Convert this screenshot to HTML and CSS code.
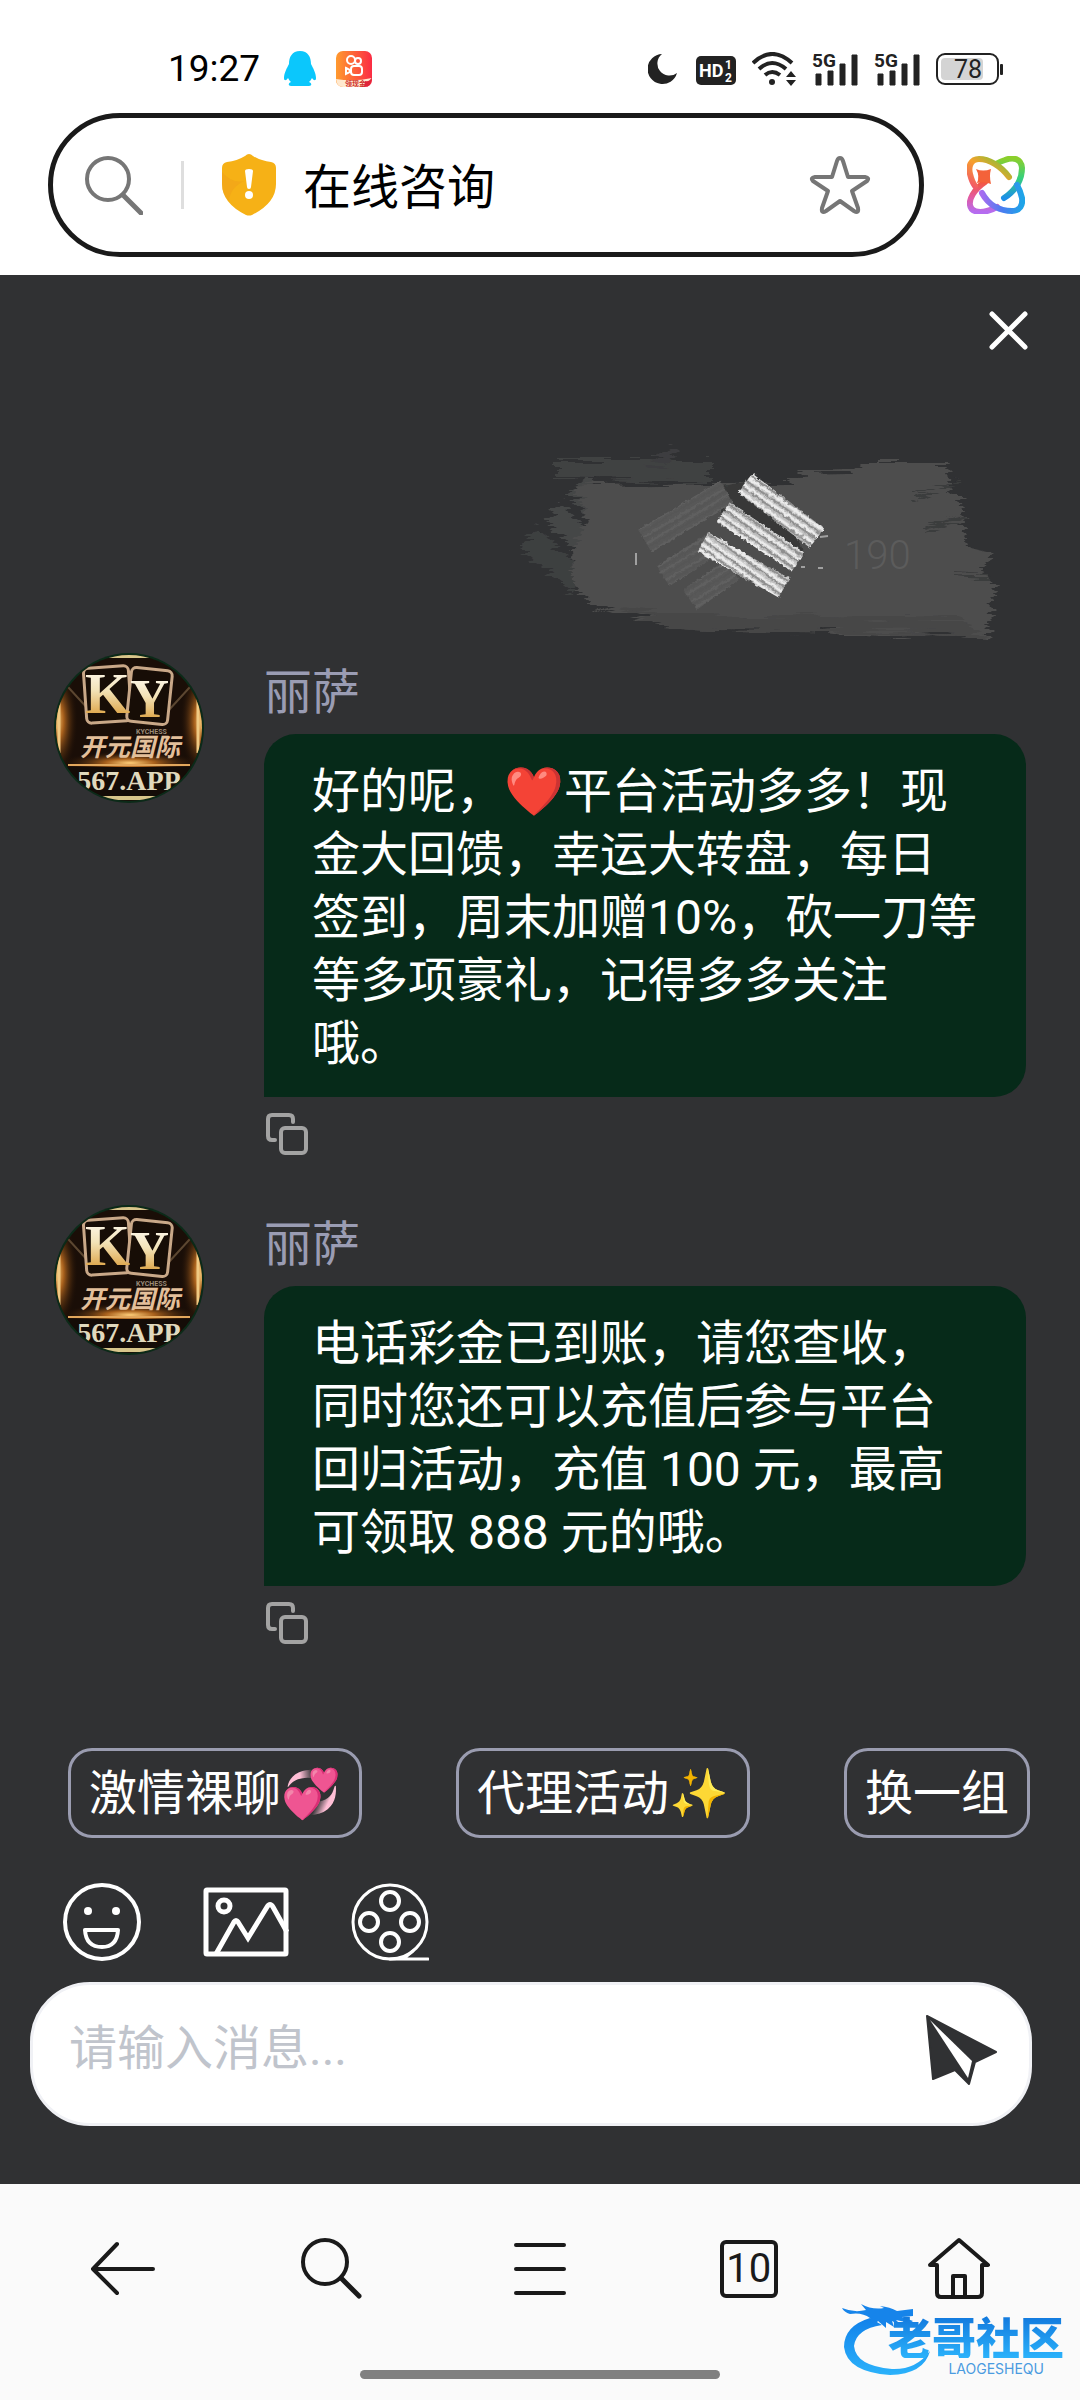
FILE: index.html
```html
<!DOCTYPE html>
<html lang="zh-CN">
<head>
  <meta charset="UTF-8">
  <meta name="viewport" content="width=device-width, initial-scale=1.0">
  <title>在线咨询</title>
  <link rel="stylesheet" href="styles.css">
</head>
<body>
  <!-- shared avatar drawing -->
  <svg class="defs" width="0" height="0" aria-hidden="true">
    <defs>
      <linearGradient id="gold" x1="0" y1="0" x2="0" y2="1">
        <stop offset="0.1" stop-color="#fffaf0"/>
        <stop offset="0.45" stop-color="#f3e3b8"/>
        <stop offset="0.9" stop-color="#d99a35"/>
      </linearGradient>
      <radialGradient id="glow" cx="0.5" cy="0.5" r="0.5">
        <stop offset="0" stop-color="#ffcf7a"/>
        <stop offset="0.35" stop-color="#a8601c"/>
        <stop offset="1" stop-color="#1a0e07" stop-opacity="0"/>
      </radialGradient>
      <clipPath id="round"><circle cx="75" cy="75" r="73"/></clipPath>
      <symbol id="avatar" viewBox="0 0 150 150">
        <circle cx="75" cy="75" r="75" fill="#0b2a18"/>
        <g clip-path="url(#round)">
          <rect width="150" height="150" fill="#1a0e07"/>
          <ellipse cx="2" cy="68" rx="22" ry="56" fill="url(#glow)"/>
          <ellipse cx="148" cy="68" rx="22" ry="56" fill="url(#glow)"/>
          <ellipse cx="76" cy="110" rx="70" ry="12" fill="url(#glow)"/>
          <path d="M14 34L36 58M136 34L114 58" stroke="#5b4630" stroke-width="2"/>
          <path d="M30 3H120M30 145H120" stroke="#d8c68b" stroke-width="4"/>
          <path d="M5 40V100M144 40V100" stroke="#f0c982" stroke-width="3"/>
          <rect x="31" y="14" width="45" height="55" rx="5" fill="#170d06" stroke="#c9a888" stroke-width="3" transform="rotate(-4 53 41)"/>
          <rect x="75" y="16" width="41" height="54" rx="5" fill="#170d06" stroke="#c9a888" stroke-width="3" transform="rotate(6 95 43)"/>
          <text x="31" y="60" class="avatar-serif" font-size="58" fill="url(#gold)">K</text>
          <text x="76" y="64" class="avatar-serif" font-size="54" fill="url(#gold)">Y</text>
          <text x="82" y="81" class="avatar-tiny" fill="#9a8a78">KYCHESS</text>
          <text x="26" y="103" class="avatar-cjk" fill="#e3bf9a">开元国际</text>
          <path d="M14 112H136" stroke="#e2a75c" stroke-width="2"/>
          <rect y="114" width="150" height="29" fill="#140c07"/>
          <text x="75" y="137" text-anchor="middle" class="avatar-serif" font-size="28" fill="#e0d9bd">567.APP</text>
        </g>
      </symbol>
      <symbol id="copy" viewBox="0 0 42 42">
        <path d="M9 27H6Q2 27 2 23V6Q2 2 6 2H23Q27 2 27 6V9" fill="none" stroke="#a3a3a3" stroke-width="4" stroke-linecap="round"/>
        <rect x="15" y="15" width="25" height="25" rx="4" fill="none" stroke="#a3a3a3" stroke-width="4"/>
      </symbol>
      <symbol id="signal" viewBox="0 0 46 34">
        <text x="0" y="15" class="signal-text">5G</text>
        <path d="M4 22H9V33H4zM16 19H21V33H16zM28 12H33V33H28zM40 3H45V33H40z" fill="#222" stroke="#222" stroke-width="1" stroke-linejoin="round"/>
      </symbol>
    </defs>
  </svg>

  <header class="browser-top">
    <div class="status-bar">
      <div class="status-left">
        <span class="clock">19:27</span>
        <svg width="32" height="36" viewBox="0 0 32 36">
          <path d="M16 0C8 0 5 6 5 13C3 17 0 22 0 27C0 30 2 30 4 27C5 29 6 30 7 31C4 32 4 35 7 35H25C28 35 28 32 25 31C26 30 27 29 28 27C30 30 32 30 32 27C32 22 29 17 27 13C27 6 24 0 16 0Z" fill="#0bc7fc"/>
        </svg>
        <svg width="36" height="36" viewBox="0 0 36 36">
          <defs>
            <linearGradient id="ks"><stop offset="0" stop-color="#ff9a2e"/><stop offset="1" stop-color="#fb2c44"/></linearGradient>
          </defs>
          <rect width="36" height="36" rx="7" fill="url(#ks)"/>
          <g fill="none" stroke="#fff" stroke-width="2">
            <circle cx="15" cy="9" r="4"/><circle cx="22" cy="10" r="3"/>
            <rect x="15" y="15" width="11" height="9" rx="3"/><path d="M10 17L14 19V21L10 23Z"/>
          </g>
          <path d="M0 28Q18 31 36 27L30 36H7Q1 36 0 28Z" fill="#ffe9cf"/>
          <text x="9" y="35" class="ks-text">领现金</text>
          <path d="M29 30Q34 31 36 26Q36 36 28 36Z" fill="#e0253a"/>
        </svg>
      </div>
      <div class="status-right">
        <svg width="32" height="34" viewBox="0 0 32 34">
          <path d="M14 2A15 15 0 1 0 29 21A12 12 0 0 1 14 2Z" fill="#222"/>
        </svg>
        <svg width="40" height="34" viewBox="0 0 40 34">
          <rect y="4" width="40" height="29" rx="5" fill="#222"/>
          <text x="3" y="25" class="hd-text">HD</text>
          <text x="29" y="17" class="hd-small">1</text>
          <text x="29" y="30" class="hd-small">2</text>
        </svg>
        <svg width="44" height="34" viewBox="0 0 44 34">
          <g fill="none" stroke="#222" stroke-width="4">
            <path d="M1 11Q20 -7 40 11"/><path d="M7 17Q20 5 34 17"/><path d="M13 23Q20 17 28 23"/>
          </g>
          <circle cx="20" cy="30" r="3" fill="#222"/>
          <path d="M34 25L39 19L44 25ZM34 28L39 34L44 28Z" fill="#222"/>
        </svg>
        <svg width="46" height="34"><use href="#signal"/></svg>
        <svg width="46" height="34"><use href="#signal"/></svg>
        <svg width="67" height="34" viewBox="0 0 67 34">
          <rect x="1" y="2" width="61" height="30" rx="8" fill="none" stroke="#222" stroke-width="2"/>
          <rect x="5" y="6" width="42" height="22" rx="4" fill="#d4d4d4"/>
          <rect x="64" y="12" width="3" height="11" rx="1" fill="#222"/>
          <text x="32" y="26" text-anchor="middle" class="battery-text">78</text>
        </svg>
      </div>
    </div>

    <div class="address-row">
      <div class="address-bar">
        <svg width="58" height="60" viewBox="0 0 58 60">
          <circle cx="23" cy="24" r="21" fill="none" stroke="#767676" stroke-width="4"/>
          <path d="M38 40L56 58" stroke="#767676" stroke-width="5" stroke-linecap="round"/>
        </svg>
        <span class="divider"></span>
        <svg class="shield" width="54" height="62" viewBox="0 0 54 62">
          <path d="M27 0Q29 0 31 2Q39 7 49 8Q54 9 54 14V30Q54 49 30 61Q27 62 24 61Q0 49 0 30V14Q0 9 5 8Q15 7 23 2Q25 0 27 0Z" fill="#f6b116"/>
          <path d="M22 27Q8 34 7 47Q0 40 0 30V18Q10 30 22 27Z" fill="#efa01a" opacity="0.5"/>
          <path d="M23 17Q23 15 27 15Q31 15 31 17L29 33Q29 35 27 35Q25 35 25 33Z" fill="#fff"/>
          <circle cx="27" cy="41" r="4" fill="#fff"/>
        </svg>
        <input class="address" type="text" value="在线咨询" aria-label="地址栏">
        <button class="icon-btn" aria-label="收藏">
          <svg width="62" height="60" viewBox="0 0 62 60">
            <path d="M31 3Q33 3 34 6L39 22H56Q61 23 58 26L43 36L49 53Q50 59 45 56L31 46L17 56Q12 59 13 53L19 36L4 26Q1 23 6 22H23L28 6Q29 3 31 3Z" fill="none" stroke="#767676" stroke-width="4" stroke-linejoin="round"/>
          </svg>
        </button>
      </div>
      <button class="icon-btn" aria-label="AI 助手">
        <svg width="58" height="58" viewBox="0 0 58 58">
          <defs>
            <linearGradient id="g1" x1="0" y1="1" x2="1" y2="0"><stop offset="0" stop-color="#f2556c"/><stop offset="0.5" stop-color="#f7a02c"/><stop offset="1" stop-color="#6cc93a"/></linearGradient>
            <linearGradient id="g2" x1="0" y1="0" x2="0" y2="1"><stop offset="0" stop-color="#8bcf2c"/><stop offset="0.5" stop-color="#35d07c"/><stop offset="1" stop-color="#1b8fe8"/></linearGradient>
            <linearGradient id="g3"><stop offset="0" stop-color="#a76cf0"/><stop offset="0.5" stop-color="#4a7cf0"/><stop offset="1" stop-color="#1fa4e8"/></linearGradient>
            <linearGradient id="g4" x1="0" y1="0" x2="0" y2="1"><stop offset="0" stop-color="#f4573c"/><stop offset="0.5" stop-color="#e35aa0"/><stop offset="1" stop-color="#b56cf0"/></linearGradient>
          </defs>
          <g fill="none" stroke-width="6" stroke-linecap="round">
            <path d="M18 26C6 34 2 44 3 49C4 56 12 57 20 55C24 54 27 53 30 51" stroke="url(#g4)"/>
            <path d="M37 42C50 34 55 22 55 12C54 2 46 1 38 4C35 5 32 6 29 8" stroke="url(#g2)"/>
            <path d="M42 21C34 10 22 3 12 3C4 3 1 10 3 18C4 22 5 26 8 30" stroke="url(#g1)"/>
            <path d="M15 37C22 50 34 55 45 55C53 55 56 49 55 42C54 38 53 34 50 29" stroke="url(#g3)"/>
          </g>
          <path d="M9 13Q16 16 24 13Q22 20 24 28Q17 25 10 27Q13 20 9 13Z" fill="#f4623a"/>
        </svg>
      </button>
    </div>
  </header>

  <main class="chat">
    <div class="chat-head">
      <button class="icon-btn" aria-label="关闭">
        <svg width="39" height="39" viewBox="0 0 39 39">
          <path d="M3 3L36 36M36 3L3 36" stroke="#fff" stroke-width="5" stroke-linecap="round"/>
        </svg>
      </button>
    </div>

    <div class="messages">
      <!-- message scratched out by brush -->
      <svg class="scratch" width="506" height="210" viewBox="0 0 506 210" aria-hidden="true">
        <defs>
          <filter id="rough" x="-5%" y="-5%" width="110%" height="110%">
            <feTurbulence type="fractalNoise" baseFrequency="0.02 0.3" numOctaves="2" seed="4" result="n"/>
            <feDisplacementMap in="SourceGraphic" in2="n" scale="22" xChannelSelector="R" yChannelSelector="A"/>
          </filter>
          <filter id="grain" x="-10%" y="-10%" width="120%" height="120%">
            <feTurbulence type="fractalNoise" baseFrequency="0.25" numOctaves="2" seed="7" result="n"/>
            <feDisplacementMap in="SourceGraphic" in2="n" scale="4" xChannelSelector="R" yChannelSelector="G"/>
          </filter>
          <pattern id="chalk" width="300" height="29" patternUnits="userSpaceOnUse" patternTransform="rotate(35)">
            <rect width="300" height="29" fill="#bdbdbd"/>
            <path d="M0 3H300M0 10H300M0 16H300M0 24H300" stroke="#ececec" stroke-width="3"/>
            <path d="M0 6H300M0 13H300M0 20H300M0 27H300" stroke="#8f8f8f" stroke-width="2"/>
          </pattern>
          <pattern id="ash" width="300" height="16" patternUnits="userSpaceOnUse" patternTransform="rotate(-31)">
            <rect width="300" height="16" fill="#595959"/>
            <path d="M0 3H300M0 10H300" stroke="#606060" stroke-width="2"/>
            <path d="M0 6H300M0 14H300" stroke="#525252" stroke-width="1"/>
          </pattern>
        </defs>
        <g filter="url(#rough)">
          <path d="M37 20H190V42L37 38Z" fill="#414243"/>
          <path d="M128 25L152 8L158 12L145 26Z" fill="#3d3e3f"/>
          <path d="M8 98L60 144" stroke="#3e3f40" stroke-width="24"/>
          <path d="M32 72L66 104M58 46L80 74" stroke="#454647" stroke-width="24"/>
          <path d="M54 48L73 46L267 43L277 33L330 32L340 23L430 23L427 47L440 57L447 107L473 113L465 130L474 145L468 200L413 193L357 197L280 190L193 190L147 187L97 172L73 165L53 143L52 107L70 80Z" fill="#4d4d4d"/>
          <path d="M97 168L150 174L440 178L468 200L413 193L193 190L147 187Z" fill="#464647"/>
          <path d="M395 58L440 40M405 90L442 78M430 135L470 137" stroke="#3b3c3d" stroke-width="4"/>
        </g>
        <g filter="url(#grain)">
          <path d="M190 48L225 42L270 80L285 115L262 118L205 80Z" fill="#383939"/>
          <path d="M125 101L207 52" stroke="url(#ash)" stroke-width="26"/>
          <path d="M143 136L196 102M170 160L212 130" stroke="url(#ash)" stroke-width="24"/>
          <path d="M225 43L297 98" stroke="url(#chalk)" stroke-width="24"/>
          <path d="M203 72L278 122" stroke="url(#chalk)" stroke-width="23"/>
          <path d="M183 102L264 148" stroke="url(#chalk)" stroke-width="22"/>
        </g>
        <path d="M116 113V125M279 97L284 95M300 97L308 96M281 127H285M298 128H303" stroke="#a0a0a0" stroke-width="2"/>
        <text x="324" y="129" class="scratch-text">190</text>
      </svg>

      <article class="message">
        <svg class="avatar" width="150" height="150" role="img" aria-label="丽萨"><use href="#avatar"/></svg>
        <div class="content">
          <div class="name">丽萨</div>
          <p class="bubble">好的呢，❤️平台活动多多！现金大回馈，幸运大转盘，每日签到，周末加赠10%，砍一刀等等多项豪礼，记得多多关注哦。</p>
          <button class="icon-btn copy" aria-label="复制"><svg width="42" height="42"><use href="#copy"/></svg></button>
        </div>
      </article>

      <article class="message">
        <svg class="avatar" width="150" height="150" role="img" aria-label="丽萨"><use href="#avatar"/></svg>
        <div class="content">
          <div class="name">丽萨</div>
          <p class="bubble">电话彩金已到账，请您查收，同时您还可以充值后参与平台回归活动，充值 100 元，最高可领取 888 元的哦。</p>
          <button class="icon-btn copy" aria-label="复制"><svg width="42" height="42"><use href="#copy"/></svg></button>
        </div>
      </article>
    </div>

    <div class="composer">
      <div class="quick">
        <button>激情裸聊💞</button>
        <button>代理活动✨</button>
        <button>换一组</button>
      </div>
      <div class="tools">
        <button class="icon-btn" aria-label="表情">
          <svg width="78" height="79" viewBox="0 0 78 79">
            <circle cx="39" cy="40" r="37" fill="none" stroke="#fff" stroke-width="4"/>
            <circle cx="25" cy="29" r="4" fill="#fff"/><circle cx="53" cy="29" r="4" fill="#fff"/>
            <path d="M22 48H55Q54 65 39 65Q23 65 22 48Z" fill="none" stroke="#fff" stroke-width="4" stroke-linejoin="round"/>
          </svg>
        </button>
        <button class="icon-btn" aria-label="图片">
          <svg width="86" height="79" viewBox="0 0 86 79">
            <rect x="3" y="8" width="80" height="64" rx="1" fill="none" stroke="#fff" stroke-width="5"/>
            <circle cx="21" cy="24" r="6" fill="none" stroke="#fff" stroke-width="5"/>
            <path d="M13 72L31 40Q33 37 35 40L45 56L64 25Q67 20 70 25L84 50" fill="none" stroke="#fff" stroke-width="5"/>
          </svg>
        </button>
        <button class="icon-btn" aria-label="视频">
          <svg width="78" height="79" viewBox="0 0 78 79">
            <g fill="none" stroke="#fff">
              <circle cx="39" cy="40" r="37" stroke-width="3"/>
              <g stroke-width="4"><circle cx="39" cy="19" r="9"/><circle cx="39" cy="60" r="9"/><circle cx="18" cy="40" r="9"/><circle cx="59" cy="40" r="9"/></g>
              <path d="M39 77H77M52 77L62 69" stroke-width="3" stroke-linecap="round"/>
            </g>
          </svg>
        </button>
      </div>
      <form class="input-bar">
        <input type="text" placeholder="请输入消息..." aria-label="消息">
        <button class="icon-btn" type="button" aria-label="发送">
          <svg width="71" height="71" viewBox="0 0 71 71">
            <path d="M1 1L70 37L49 47L43 69L29 55L7 64Z" fill="#303133" stroke="#303133" stroke-width="2" stroke-linejoin="round"/>
            <path d="M4 5L46 46L42 63Z" fill="#fff"/>
          </svg>
        </button>
      </form>
    </div>
  </main>

  <footer class="browser-nav">
    <nav>
      <button class="icon-btn" aria-label="后退">
        <svg width="66" height="66" viewBox="0 0 66 66"><path d="M28 8L4 33L28 57M4 33H64" fill="none" stroke="#1a1a1a" stroke-width="4" stroke-linecap="round" stroke-linejoin="round"/></svg>
      </button>
      <button class="icon-btn" aria-label="搜索">
        <svg width="66" height="66" viewBox="0 0 66 66"><circle cx="27" cy="26" r="22" fill="none" stroke="#1a1a1a" stroke-width="4"/><path d="M43 42L61 60" stroke="#1a1a1a" stroke-width="5" stroke-linecap="round"/></svg>
      </button>
      <button class="icon-btn" aria-label="菜单">
        <svg width="66" height="66" viewBox="0 0 66 66"><path d="M9 9H57M9 33H57M9 57H57" stroke="#1a1a1a" stroke-width="4" stroke-linecap="round"/></svg>
      </button>
      <button class="tabs" aria-label="标签页">10</button>
      <button class="icon-btn" aria-label="主页">
        <svg width="66" height="66" viewBox="0 0 66 66"><path d="M12 29H5L34 4L63 29H57V57Q57 61 53 61H16Q12 61 12 57ZM28 61V40H40V61" fill="none" stroke="#1a1a1a" stroke-width="4" stroke-linejoin="round"/></svg>
      </button>
    </nav>
    <div class="home-bar"></div>

    <div class="watermark">
      <svg width="90" height="72" viewBox="0 0 90 72" aria-hidden="true">
        <defs><linearGradient id="wm" x1="0" y1="0" x2="0" y2="1"><stop offset="0" stop-color="#1181ea"/><stop offset="1" stop-color="#2bb2fb"/></linearGradient></defs>
        <path d="M28 14Q2 22 2 43Q5 68 48 71Q82 70 88 47Q74 66 50 65Q14 62 12 42Q14 25 40 21Z" fill="url(#wm)"/>
        <path d="M0 4Q12 9 24 6L19 0Q30 6 42 4L38 2Q48 3 55 7L71 5V12L60 13L71 17L68 19L54 16L60 22L50 17L52 23L44 18L44 24L36 17L32 22L28 14Q20 8 8 10Q2 8 0 4Z" fill="#1684ea"/>
      </svg>
      <div class="watermark-name">老哥社区</div>
      <div class="watermark-sub">LAOGESHEQU</div>
    </div>
  </footer>
</body>
</html>
```
FILE: styles.css
```css
* {
  box-sizing: border-box;
}
body {
  margin: 0;
  min-height: 100vh;
  display: flex;
  flex-direction: column;
  font-family: Roboto, "Noto Sans CJK SC", sans-serif;
  font-size: 48px;
  background: #fff;
  color: #000;
}
svg {
  display: block;
  flex: none;
}
button, input {
  font: inherit;
  color: inherit;
}
.defs {
  position: absolute;
}
.icon-btn {
  display: block;
  flex: none;
  padding: 0;
  border: none;
  background: none;
  cursor: pointer;
}

/* status bar and address bar */
.status-bar {
  display: flex;
  justify-content: space-between;
  align-items: center;
  height: 113px;
  padding: 24px 77px 0 168px;
}
.status-left {
  display: flex;
  align-items: center;
  gap: 20px;
}
.clock {
  font-size: 37px;
  margin-right: 4px;
}
.status-right {
  display: flex;
  align-items: center;
  gap: 16px;
}
.signal-text {
  font: bold 19px Roboto, sans-serif;
  fill: #222;
}
.hd-text {
  font: bold 18px Roboto, sans-serif;
  fill: #fff;
}
.hd-small {
  font: bold 12px Roboto, sans-serif;
  fill: #fff;
}
.battery-text {
  font: 25px Roboto, sans-serif;
  fill: #222;
}
.ks-text {
  font: bold 7px "Noto Sans CJK SC", sans-serif;
  fill: #d0312d;
}
.address-row {
  display: flex;
  align-items: center;
  gap: 43px;
  padding: 0 55px 18px 48px;
}
.address-bar {
  flex: 1;
  min-width: 0;
  display: flex;
  align-items: center;
  height: 144px;
  padding: 0 48px 0 32px;
  border: 5px solid #1a1a1a;
  border-radius: 72px;
}
.divider {
  flex: none;
  width: 3px;
  height: 48px;
  margin: 0 38px;
  background: #dedede;
}
.address {
  flex: 1;
  min-width: 0;
  margin-left: 27px;
  padding: 0 0 4px;
  border: none;
  outline: none;
  background: none;
}

/* chat */
.chat {
  flex: 1;
  display: flex;
  flex-direction: column;
  background: #303133;
  color: #fff;
}
.chat-head {
  display: flex;
  justify-content: flex-end;
  padding: 36px 52px 0;
}
.messages {
  padding: 90px 54px 0;
}
.scratch {
  margin: 0 0 3px auto;
}
.scratch-text {
  font: 300 40px Roboto, sans-serif;
  fill: #5c5c5c;
}
.message {
  display: flex;
  gap: 60px;
  margin-bottom: 50px;
}
.content {
  flex: 1;
  min-width: 0;
}
.name {
  padding-top: 3px;
  line-height: 74px;
  margin-bottom: 4px;
  color: #9a9cb3;
}
.bubble {
  margin: 0 0 16px;
  padding: 26px 48px 22px;
  line-height: 63px;
  background: #062a19;
  border-radius: 32px 32px 32px 0;
}
.copy {
  margin-left: 2px;
}
.avatar-serif {
  font-family: "Liberation Serif", serif;
  font-weight: bold;
}
.avatar-cjk {
  font: italic bold 25px "Noto Sans CJK SC", sans-serif;
}
.avatar-tiny {
  font: bold 7px Roboto, sans-serif;
}

/* quick replies, tools, input */
.composer {
  margin-top: auto;
  padding: 0 48px 58px 30px;
}
.quick {
  display: flex;
  justify-content: space-between;
  padding: 0 2px 0 38px;
}
.quick button {
  height: 90px;
  padding: 0 18px;
  border: 3px solid #9a9cb0;
  border-radius: 24px;
  background: none;
  line-height: 63px;
}
.tools {
  display: flex;
  gap: 62px;
  margin: 44px 0 21px 33px;
}
.input-bar {
  display: flex;
  align-items: center;
  height: 144px;
  padding: 0 32px 8px 36px;
  border: 3px solid #f0f1f5;
  border-radius: 60px;
  background: #fff;
}
.input-bar input {
  flex: 1;
  min-width: 0;
  padding: 0 0 4px;
  border: none;
  outline: none;
  background: none;
  color: #303133;
}
.input-bar input::placeholder {
  color: #c0c4cc;
  opacity: 1;
}

/* bottom navigation */
.browser-nav {
  position: relative;
  padding: 52px 18px 21px;
  background: #fafafa;
}
.browser-nav nav {
  display: grid;
  grid-template-columns: repeat(5, 1fr);
  justify-items: center;
  align-items: center;
}
.tabs {
  width: 58px;
  height: 58px;
  padding: 0;
  border: 4px solid #1a1a1a;
  border-radius: 6px;
  background: none;
  color: #1a1a1a;
  font-size: 40px;
  line-height: 50px;
}
.home-bar {
  width: 360px;
  max-width: 50%;
  height: 9px;
  margin: 68px auto 0;
  border-radius: 5px;
  background: #808080;
}
.watermark {
  position: absolute;
  right: 16px;
  bottom: 24px;
  width: 222px;
  height: 72px;
}
.watermark-name {
  position: absolute;
  right: 0;
  top: 10px;
  font: 900 44px/44px "Noto Sans CJK SC", sans-serif;
  background: linear-gradient(#1176dc, #2bb2fb);
  background-clip: text;
  -webkit-background-clip: text;
  color: transparent;
}
.watermark-sub {
  position: absolute;
  right: 20px;
  bottom: 0;
  font: 14px/14px Inter, sans-serif;
  color: #4a9be0;
}
```
